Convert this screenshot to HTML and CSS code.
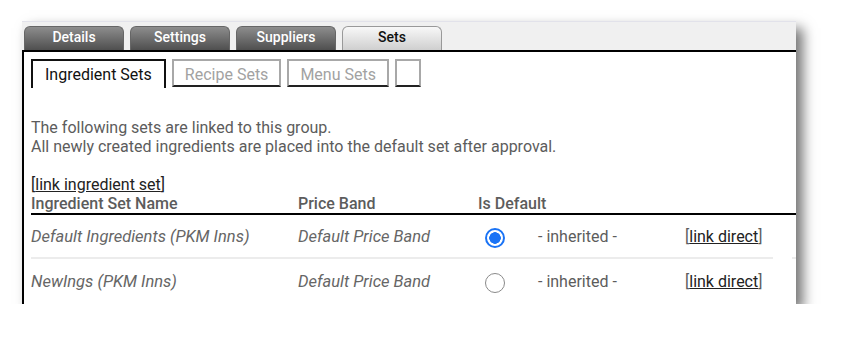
FILE: index.html
```html
<!DOCTYPE html>
<html lang="en">
<head>
  <meta charset="UTF-8" />
  <title>Group Sets</title>
  <link rel="stylesheet" href="styles.css">
</head>
<body>
  <div class="window">
    <!-- Main tabs -->
    <div class="tabbar">
      <span class="tab">Details</span>
      <span class="tab">Settings</span>
      <span class="tab">Suppliers</span>
      <span class="tab active">Sets</span>
    </div>

    <div class="content">
      <!-- Sub tabs -->
      <div class="subtabs">
        <span class="subtab active">Ingredient Sets</span>
        <span class="subtab">Recipe Sets</span>
        <span class="subtab">Menu Sets</span>
        <span class="subtab empty"></span>
      </div>

      <p class="intro">
        The following sets are linked to this group.<br>
        All newly created ingredients are placed into the default set after approval.
      </p>

      <div class="link-line">[<a href="#">link ingredient set</a>]</div>

      <div class="set-table">
        <div class="cell head">Ingredient Set Name</div>
        <div class="cell head">Price Band</div>
        <div class="cell head span2">Is Default</div>
        <div class="cell head"></div>
        <div class="cell head gap"></div>
        <div class="cell head"></div>

        <div class="cell name">Default Ingredients (PKM Inns)</div>
        <div class="cell name">Default Price Band</div>
        <div class="cell"><span class="radio checked"></span></div>
        <div class="cell">- inherited -</div>
        <div class="cell">[<a href="#">link direct</a>]</div>
        <div class="cell gap"></div>
        <div class="cell"></div>

        <div class="cell name last">NewIngs (PKM Inns)</div>
        <div class="cell name last">Default Price Band</div>
        <div class="cell last"><span class="radio"></span></div>
        <div class="cell last">- inherited -</div>
        <div class="cell last">[<a href="#">link direct</a>]</div>
        <div class="cell last gap"></div>
        <div class="cell last"></div>
      </div>
    </div>
  </div>
</body>
</html>
```

FILE: styles.css
```css
* {
  box-sizing: border-box;
}

body {
  margin: 0;
  background: #fff;
  font-family: Roboto, "Liberation Sans", sans-serif;
}

.window {
  margin: 21px 0 0 22px;
  width: 774px;
  height: 283px;
  background: #fff;
  overflow: hidden;
  box-shadow: 7px 7px 12px rgba(0, 0, 0, 0.55);
  border-top: 1px solid #e2e2ea;
}

.tabbar {
  height: 30px;
  background: #f0f0f0;
  border-bottom: 2px solid #000;
  display: flex;
  align-items: flex-end;
  gap: 6px;
  padding-left: 2px;
}

.tab {
  width: 100px;
  height: 24px;
  border-radius: 6px 6px 0 0;
  border: 1px solid #666;
  border-bottom: none;
  background: linear-gradient(#8d8d8d, #4f4f4f);
  color: #fff;
  font-size: 14px;
  font-weight: 500;
  text-align: center;
  line-height: 20px;
}

.tab.active {
  background: linear-gradient(#f8f8f8, #cfcfcf);
  border-color: #999;
  color: #111;
}

.content {
  border-left: 2px solid #000;
  padding: 7px 0 0 7px;
  height: 253px;
  color: #5c5c5c;
}

.subtabs {
  display: flex;
  align-items: flex-start;
  gap: 6px;
}

.subtab {
  height: 28px;
  padding: 0 11px;
  border: 2px solid #a8a8a8;
  border-bottom-color: #222;
  color: #a2a2a2;
  font-size: 16px;
  line-height: 27px;
}

.subtab.active {
  height: 29px;
  padding: 0 12px;
  border: 2px solid #111;
  border-bottom: none;
  color: #111;
}

.subtab.empty {
  width: 26px;
  padding: 0;
}

.intro {
  margin: 30px 0 0;
  font-size: 16px;
  line-height: 19px;
}

.link-line {
  margin-top: 19px;
  font-size: 16px;
  line-height: 19px;
  color: #222;
}

a {
  color: #222;
}

.set-table {
  display: grid;
  grid-template-columns: 267px 180px 60px 147px 88px 19px 60px;
  width: 821px;
  font-size: 16px;
}

.cell {
  height: 44px;
  display: flex;
  align-items: center;
  border-bottom: 2px solid #ececec;
}

.cell.head {
  height: 21px;
  align-items: center;
  font-weight: 500;
  border-bottom: 2px solid #000;
}

.cell.span2 {
  grid-column: span 2;
}

.cell.name {
  font-style: italic;
  font-size: 16.5px;
  color: #666;
}

.cell.gap {
  border-bottom-color: transparent;
}

.cell.head.gap {
  border-bottom-color: #000;
}

.cell.last {
  border-bottom: none;
}

.radio {
  width: 20px;
  height: 20px;
  margin: 4px 0 0 7px;
  border-radius: 50%;
  border: 1.5px solid #8a8a8a;
  background: #fff;
}

.radio.checked {
  border: 2px solid #1a73f5;
  background: radial-gradient(circle, #1a73f5 0 5.5px, #fff 6px);
}
```
